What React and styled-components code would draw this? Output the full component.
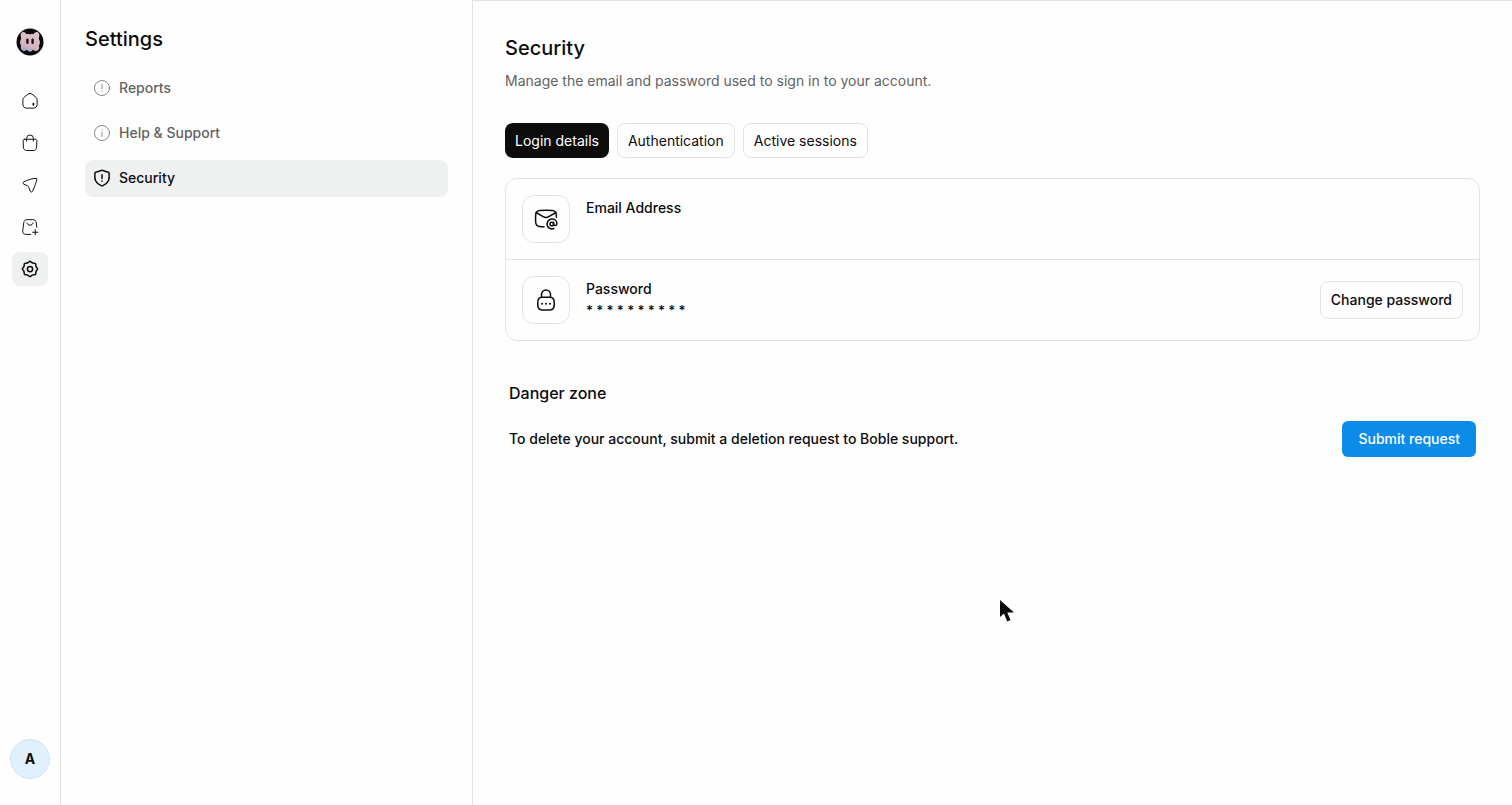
import React from "react";
import styled, { createGlobalStyle } from "styled-components";

const ink = "#0c0c0d";
const muted = "#626363";
const line = "#e2e3e3";
const soft = "#eff1f1";

const GlobalStyle = createGlobalStyle`
  *, *::before, *::after { box-sizing: border-box; }
  body {
    margin: 0;
    background: #fefefe;
    color: ${ink};
    font-family: Inter, "Liberation Sans", sans-serif;
    font-size: 14px;
    line-height: 20px;
  }
  button { font: inherit; color: inherit; cursor: pointer; }
  h1, h2, h3, p, ul, dl, dd { margin: 0; padding: 0; }
  svg { display: block; flex: none; }
`;

const Shell = styled.div`
  display: flex;
  min-height: 100vh;
`;

const Rail = styled.nav`
  display: flex;
  flex-direction: column;
  align-items: center;
  flex: none;
  width: 61px;
  padding: 28px 0 26px;
  border-right: 1px solid ${line};
`;

const RailLinks = styled.ul`
  display: flex;
  flex-direction: column;
  gap: 8px;
  margin-top: 28px;
  list-style: none;
`;

const RailLink = styled.a`
  display: flex;
  align-items: center;
  justify-content: center;
  width: 36px;
  height: 34px;
  border-radius: 8px;
  color: ${ink};
  background: ${(p) => (p.$active ? soft : "transparent")};
`;

const Avatar = styled.button`
  width: 40px;
  height: 40px;
  margin-top: auto;
  padding: 0;
  border: 1px solid #d5e3ec;
  border-radius: 50%;
  background: #e0f1fe;
  font-weight: 700;
`;

const SidePanel = styled.aside`
  flex: none;
  width: 412px;
  padding: 24px;
  border-right: 1px solid ${line};
`;

const Title = styled.h1`
  font-size: 20px;
  font-weight: 500;
  line-height: 30px;
`;

const SideList = styled.ul`
  display: flex;
  flex-direction: column;
  gap: 8px;
  margin-top: 16px;
  list-style: none;
`;

const SideLink = styled.a`
  display: flex;
  align-items: center;
  gap: 8px;
  padding: 8px 8px 9px;
  border-radius: 8px;
  color: ${(p) => (p.$active ? ink : muted)};
  background: ${(p) => (p.$active ? soft : "transparent")};
  font-weight: 500;
  text-decoration: none;
`;

const Main = styled.main`
  flex: 1;
  min-width: 0;
  padding: 32px;
  border-top: 1px solid ${line};
`;

const Lead = styled.p`
  margin-top: 8px;
  color: ${muted};
`;

const Tabs = styled.div`
  display: flex;
  gap: 8px;
  margin: 32px 0 20px;
`;

const Tab = styled.button`
  height: 35px;
  padding: 0 10px;
  border: ${(p) => (p.$active ? "0" : `1px solid ${line}`)};
  border-radius: 8px;
  color: ${(p) => (p.$active ? "#fff" : ink)};
  background: ${(p) => (p.$active ? ink : "transparent")};
`;

const Card = styled.section`
  border: 1px solid ${line};
  border-radius: 12px;
`;

const CardRow = styled.div`
  display: flex;
  align-items: center;
  gap: 16px;
  padding: 16px;

  & + & { border-top: 1px solid ${line}; }
`;

const IconTile = styled.div`
  display: flex;
  align-items: center;
  justify-content: center;
  flex: none;
  width: 48px;
  height: 48px;
  border: 1px solid ${line};
  border-radius: 12px;
`;

const RowText = styled.div`
  flex: 1;
  align-self: flex-start;
  padding-top: 3px;
  font-weight: 500;
`;

const MaskedValue = styled.p`
  margin-top: 1px;
  font-size: 13px;
  font-weight: 600;
`;

const OutlineButton = styled.button`
  height: 38px;
  padding: 0 10px;
  border: 1px solid ${line};
  border-radius: 8px;
  background: transparent;
  font-weight: 500;
`;

const DangerZone = styled.section`
  margin-top: 40px;
  padding: 0 4px;
`;

const DangerTitle = styled.h2`
  font-size: 16px;
  font-weight: 500;
  line-height: 24px;
`;

const DangerRow = styled.div`
  display: flex;
  align-items: center;
  justify-content: space-between;
  gap: 16px;
  margin-top: 16px;
  font-weight: 500;
`;

const PrimaryButton = styled.button`
  height: 36px;
  padding: 0 16px;
  border: 0;
  border-radius: 6px;
  color: #fff;
  background: #0c8ce9;
  font-weight: 500;
`;

const Pointer = styled.svg`
  position: absolute;
  left: 999px;
  top: 599px;
  pointer-events: none;
`;

function Icon({ size = 18, stroke = 1.3, children }) {
  return (
    <svg
      width={size}
      height={size}
      viewBox="0 0 24 24"
      fill="none"
      stroke="currentColor"
      strokeWidth={stroke}
      strokeLinecap="round"
      strokeLinejoin="round"
      aria-hidden="true"
    >
      {children}
    </svg>
  );
}

const Logo = () => (
  <svg width="28" height="28" viewBox="0 0 28 28" role="img" aria-label="Boble">
    <defs>
      <linearGradient id="fur" x1="0.6" y1="0" x2="0.3" y2="1">
        <stop offset="0" stopColor="#dcc4cd" />
        <stop offset="0.7" stopColor="#d4b3c2" />
        <stop offset="1" stopColor="#9da2c8" />
      </linearGradient>
    </defs>
    <circle cx="14" cy="14" r="13.5" fill="#0a0809" />
    <path
      d="M4.800 8.500C3.600 3.600 8.600 2.600 10.400 6.200Q12.300 5 14 6.600Q15.700 5 17.600 6.200C19.400 2.600 24.400 3.600 23.200 8.500Q22.400 10.500 23.600 12.500Q24.800 15.500 23 17.500Q23.800 22 20.500 23Q18.600 23.400 17 21.800Q15.800 23.800 14 23.800Q12.200 23.800 11 21.800Q9.400 23.400 7.500 23Q4.200 22 5 17.500Q3.200 15.500 4.400 12.500Q5.600 10.500 4.800 8.500Z"
      fill="url(#fur)"
    />
    <rect x="10.200" y="10.500" width="2.400" height="5.500" rx="1.200" fill="#161013" />
    <rect x="15.400" y="10.500" width="2.400" height="5.500" rx="1.200" fill="#161013" />
  </svg>
);

const HomeIcon = () => (
  <Icon>
    <path d="M2.500 10.600c0-1.700.7-3 2.100-4l4.700-3.700c1.700-1.300 3.700-1.300 5.400 0l4.700 3.700c1.400 1 2.100 2.300 2.100 4v5.700c0 3-1.700 5.200-4.700 5.200H7.200c-3 0-4.700-2.200-4.700-5.200Z" />
    <path d="M16.500 15.500v1.500" strokeWidth="2.400" />
  </Icon>
);

const BagIcon = () => (
  <Icon>
    <path d="M5 7h14c1.500 0 2.200.7 2.200 2.100l-.4 8.400c-.2 3-1.700 4.500-4.500 4.500H7.700c-2.800 0-4.300-1.500-4.500-4.500l-.4-8.400C2.800 7.700 3.500 7 5 7Z" />
    <path d="M7.500 9.500V5.800a4.500 4.500 0 0 1 9 0v3.700" />
  </Icon>
);

const SendIcon = () => (
  <Icon>
    <path d="M20.300 3.200C17.200 2.700 9.500 4.900 3.800 7.700c-1.600.8-1.500 2.500 0 3.200l4.700 2.200c1 .5 1.500 1 1.900 2l1.900 5.200c.6 1.500 2.300 1.600 3 .1 2.700-5.500 5.200-12.500 5.900-16 .1-.7-.2-1.100-.9-1.200Z" />
  </Icon>
);

const BagPlusIcon = () => (
  <Icon>
    <path d="M13 21.800H6.500c-3 0-4.600-1.900-4.200-4.900L3.700 6.300C4.100 3.600 5.600 2.200 8.300 2.200h7.400c2.700 0 4.200 1.400 4.600 4.100l.8 6.200" />
    <path d="M8 6.500c.4 4.300 7.600 4.300 8 0M19 15.500v7M15.500 19h7" />
  </Icon>
);

const GearIcon = () => (
  <Icon stroke={2}>
    <path d="M10.900 2.400Q12 1.300 13.100 2.400Q15 4.700 18 4.200Q19.800 4.200 19.800 6Q19.300 9 21.600 10.900Q22.700 12 21.600 13.100Q19.300 15 19.800 18Q19.800 19.800 18 19.800Q15 19.300 13.100 21.600Q12 22.700 10.900 21.600Q9 19.300 6 19.800Q4.200 19.800 4.200 18Q4.700 15 2.400 13.100Q1.300 12 2.400 10.900Q4.700 9 4.200 6Q4.200 4.200 6 4.200Q9 4.700 10.900 2.400Z" />
    <circle cx="12" cy="12" r="3.500" />
  </Icon>
);

const AlertIcon = () => (
  <Icon stroke={1}>
    <circle cx="12" cy="12" r="10" />
    <path d="M12 7.500v5.500M12 16v.3" />
  </Icon>
);

const InfoIcon = () => (
  <Icon stroke={1}>
    <circle cx="12" cy="12" r="10" />
    <path d="M12 11v5.500M12 7.700v.3" />
  </Icon>
);

const ShieldIcon = () => (
  <Icon stroke={2}>
    <path d="M12 1.800c-2.200 0-4.300 2.200-7.900 2.300-.8 0-1.300.5-1.500 1.300-.4 3.600-.4 7.300.7 10 1.500 3.500 4.900 5.600 7.200 6.500 1.100.4 1.900.4 3 0 2.300-.9 5.700-3 7.200-6.500 1.100-2.700 1.100-6.400.7-10-.2-.8-.7-1.300-1.500-1.300-3.600-.1-5.700-2.300-7.900-2.300Z" />
    <path d="M12 7.500v5M12 16v.3" />
  </Icon>
);

const MailIcon = () => (
  <Icon size={24} stroke={1.5}>
    <path d="M10 19.800c-1.800 0-3.300-.1-4.600-.3-2.400-.3-3.500-1.500-3.700-4.200-.2-2.500-.2-5.200 0-7.700.2-2.600 1.500-4 4.100-4.200 4.100-.3 8.300-.3 12.400 0 2.600.2 3.900 1.600 4.100 4.200l.1 2.600" />
    <path d="m2 5.500 7.200 4.200c2.100 1.200 3.500 1.200 5.600 0L22 5.500" />
    <circle cx="17.800" cy="17" r="1.800" />
    <path d="M19.600 15.200v2.100c0 1.900 3.300 1.800 3.300-.7 0-2.600-2.200-4.500-5-4.500a4.900 4.900 0 1 0 2 9.400" />
  </Icon>
);

const LockIcon = () => (
  <Icon size={24} stroke={1.5}>
    <path d="M3.900 13c.3-2.200 1.700-3.500 3.900-3.700 2.700-.2 5.700-.2 8.400 0 2.200.2 3.600 1.500 3.900 3.700.2 1.600.2 3.500 0 5.100-.3 2.300-1.700 3.600-3.900 3.800-2.700.2-5.700.2-8.400 0-2.200-.2-3.600-1.500-3.900-3.800-.2-1.600-.2-3.500 0-5.100Z" />
    <path d="M7.500 9V6.500a4.500 4.500 0 0 1 9 0V9" />
    <path d="M8 15.800h.01M12 15.800h.01M16 15.800h.01" strokeWidth="2" />
  </Icon>
);

const railItems = [
  { label: "Home", Glyph: HomeIcon },
  { label: "Orders", Glyph: BagIcon },
  { label: "Campaigns", Glyph: SendIcon },
  { label: "Add product", Glyph: BagPlusIcon },
  { label: "Settings", Glyph: GearIcon, active: true },
];

const sideItems = [
  { label: "Reports", Glyph: AlertIcon },
  { label: "Help & Support", Glyph: InfoIcon },
  { label: "Security", Glyph: ShieldIcon, active: true },
];

const tabs = ["Login details", "Authentication", "Active sessions"];

export default function App() {
  const [current, setCurrent] = React.useState(tabs[0]);

  return (
    <>
      <GlobalStyle />
      <Shell>
        <Rail aria-label="Main">
          <Logo />
          <RailLinks>
            {railItems.map(({ label, Glyph, active }) => (
              <li key={label}>
                <RailLink href="#" aria-label={label} $active={active}>
                  <Glyph />
                </RailLink>
              </li>
            ))}
          </RailLinks>
          <Avatar type="button">A</Avatar>
        </Rail>

        <SidePanel>
          <Title as="h2">Settings</Title>
          <SideList>
            {sideItems.map(({ label, Glyph, active }) => (
              <li key={label}>
                <SideLink href="#" $active={active}>
                  <Glyph />
                  {label}
                </SideLink>
              </li>
            ))}
          </SideList>
        </SidePanel>

        <Main>
          <Title>Security</Title>
          <Lead>Manage the email and password used to sign in to your account.</Lead>
          <Tabs role="tablist">
            {tabs.map((name) => (
              <Tab
                key={name}
                type="button"
                role="tab"
                aria-selected={name === current}
                $active={name === current}
                onClick={() => setCurrent(name)}
              >
                {name}
              </Tab>
            ))}
          </Tabs>

          <Card>
            <CardRow>
              <IconTile><MailIcon /></IconTile>
              <RowText>
                <p>Email Address</p>
              </RowText>
            </CardRow>
            <CardRow>
              <IconTile><LockIcon /></IconTile>
              <RowText>
                <p>Password</p>
                <MaskedValue>* * * * * * * * * *</MaskedValue>
              </RowText>
              <OutlineButton type="button">Change password</OutlineButton>
            </CardRow>
          </Card>

          <DangerZone>
            <DangerTitle>Danger zone</DangerTitle>
            <DangerRow>
              <p>To delete your account, submit a deletion request to Boble support.</p>
              <PrimaryButton type="button">Submit request</PrimaryButton>
            </DangerRow>
          </DangerZone>
        </Main>
      </Shell>
      <Pointer width="16" height="24" viewBox="0 0 16 24" aria-hidden="true">
        <path d="M1 1v17l4-3.500 3.200 8 3.300-1.400-3.200-7.600H15Z" fill="#0b0b0b" />
      </Pointer>
    </>
  );
}
